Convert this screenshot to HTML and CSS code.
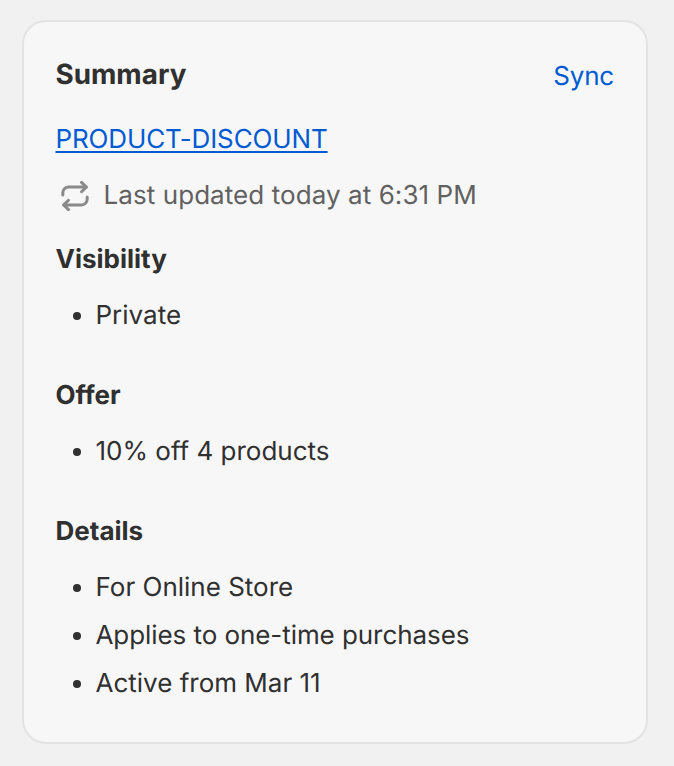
FILE: index.html
```html
<!DOCTYPE html>
<html lang="en">
<head>
<meta charset="utf-8">
<title>Summary</title>
<link rel="stylesheet" href="styles.css">
</head>
<body>
<section class="card">
  <header class="card-head">
    <h2 class="title">Summary</h2>
    <a class="sync" href="#">Sync</a>
  </header>
  <a class="code" href="#">PRODUCT-DISCOUNT</a>
  <div class="status">
    <svg class="status-icon" viewBox="0 0 32 32" fill="none" stroke="#8a8a8a" stroke-width="3.2" stroke-linecap="round" stroke-linejoin="round" aria-hidden="true">
      <path d="M3 15v-2.500a6 6 0 0 1 6-6h19"/>
      <path d="M23 1.500l5 5-5 5"/>
      <path d="M29 17v2.500a6 6 0 0 1-6 6H4"/>
      <path d="M9 20.500l-5 5 5 5"/>
    </svg>
    <span class="status-text">Last updated today at 6:31 PM</span>
  </div>
  <h3 class="section-title">Visibility</h3>
  <ul class="list">
    <li>Private</li>
  </ul>
  <h3 class="section-title">Offer</h3>
  <ul class="list">
    <li>10% off 4 products</li>
  </ul>
  <h3 class="section-title">Details</h3>
  <ul class="list">
    <li>For Online Store</li>
    <li class="tight">Applies to one-time purchases</li>
    <li>Active from Mar 11</li>
  </ul>
</section>
</body>
</html>
```
FILE: styles.css
```css
* { box-sizing: border-box; }
html, body { margin: 0; padding: 0; }
body {
  background: #f1f1f1;
  padding: 20px 26px 22px 22px;
  font-family: Inter, "Liberation Sans", sans-serif;
  font-size: 26px;
  line-height: 40px;
  color: #303030;
  text-rendering: geometricPrecision;
  font-feature-settings: "calt" 0;
}
.card {
  height: 724px;
  background: #f7f7f7;
  border: 2px solid #e3e3e3;
  border-radius: 24px;
  padding: 35px 32px 32px 31.5px;
  display: flex;
  flex-direction: column;
  align-items: flex-start;
}
.card-head {
  align-self: stretch;
  display: flex;
  justify-content: space-between;
  align-items: center;
  height: 40px;
  margin-bottom: 23px;
}
.title {
  margin: 0 0 6px;
  font-size: 27.8px;
  font-weight: 650;
}
.sync { color: #005bd3; text-decoration: none; letter-spacing: -0.2px; }
.code {
  color: #005bd3;
  text-decoration: underline;
  text-decoration-thickness: 2px;
  text-underline-offset: 3px;
  letter-spacing: -0.13px;
  margin-bottom: 16px;
}
.status {
  display: flex;
  align-items: center;
  gap: 12px;
  color: #616161;
  margin-bottom: 24px;
}
.status-text { letter-spacing: 0.07px; }
.status-icon { width: 36px; height: 36px; padding: 3px; flex: none; transform: translate(1px, 0); }
.section-title {
  margin: 0 0 16px;
  font-size: 26px;
  font-weight: 650;
}
.list {
  margin: 0 0 40px;
  padding: 0 0 0 40px;
  list-style: disc;
}
.list li + li { margin-top: 8px; }
.list .tight { letter-spacing: -0.07px; }
```
